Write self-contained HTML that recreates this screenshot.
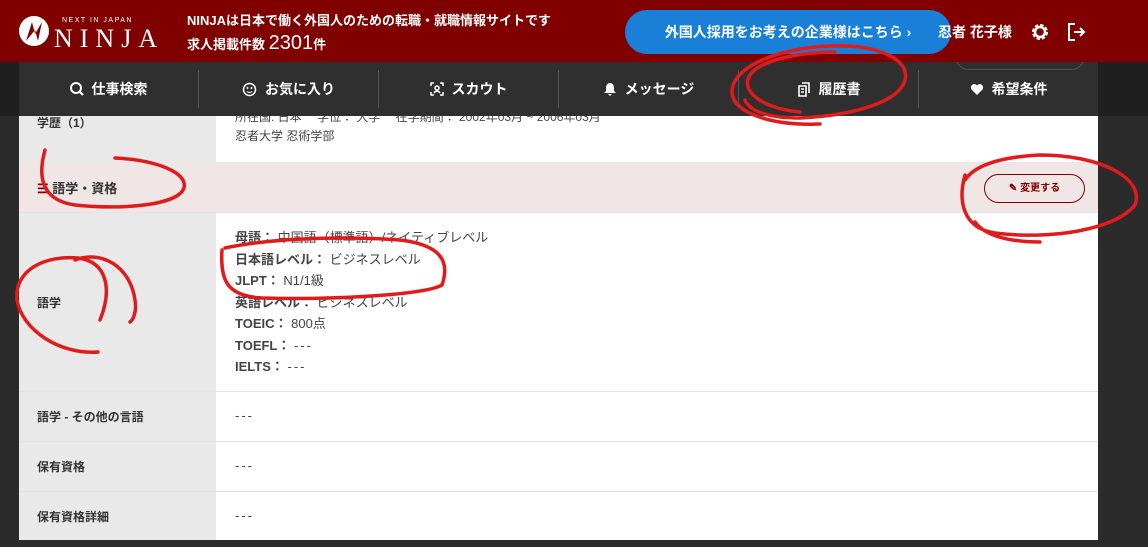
<!DOCTYPE html>
<html><head><meta charset="utf-8"><style>
*{margin:0;padding:0;box-sizing:border-box}
body{width:1148px;height:547px;overflow:hidden;background:#2b2b2b;font-family:"Liberation Sans","Noto Sans CJK JP",sans-serif;position:relative;color:#333}
.hdr{position:absolute;left:0;top:0;width:1148px;height:62px;background:#800000;color:#fff}
.logo{position:absolute;left:18px;top:14px}
.tag{position:absolute;left:187px;top:10px;font-size:13px;font-weight:bold;line-height:22px}
.tag b{font-size:20px;font-weight:normal}
.cta{position:absolute;left:625px;top:10px;width:326px;height:44px;border-radius:22px;background:#1a7fd6;color:#fff;font-size:14px;font-weight:bold;text-align:center;line-height:44px}
.user{position:absolute;left:938px;top:22px;font-size:14px;font-weight:bold}
.ghost{position:absolute;left:955px;top:40px;width:130px;height:30px;border:1px solid #555;border-radius:14px;z-index:3}
.nav{position:absolute;left:19px;top:62px;width:1079px;height:54px;background:#2f2f2f;display:flex;z-index:2}
.navl{position:absolute;left:0;top:62px;width:19px;height:54px;background:#1f1f1f;z-index:2}
.navr{position:absolute;left:1098px;top:62px;width:50px;height:54px;background:#1f1f1f;z-index:2}
.nav div{flex:1;color:#fff;font-size:14px;font-weight:bold;display:flex;align-items:center;justify-content:center;gap:8px;border-left:1px solid #555;margin:8px 0}
.nav div:first-child{border-left:none}
.card{position:absolute;left:19px;top:100px;width:1079px;height:440px;background:#fff}
.row{position:absolute;left:0;width:1079px;border-top:1px solid #e4e4e4}
.lab{position:absolute;left:0;top:0;bottom:0;width:197px;background:#e9e9e9;font-size:12px;font-weight:bold;padding-left:18px;display:flex;align-items:center}
.val{position:absolute;left:216px;font-size:13px;color:#444}
.sec{position:absolute;left:0;top:62px;width:1079px;height:50px;background:#f0e6e6}
.btn{position:absolute;left:965px;top:12px;width:101px;height:29px;border:1px solid #800000;border-radius:15px;color:#800000;font-size:10px;font-weight:bold;text-align:center;line-height:27px}
.lines div{height:21.5px;line-height:21.5px}
.d{letter-spacing:2px}
</style></head><body>
<div class="hdr">
 <div class="logo"><svg width="145" height="34"><circle cx="16" cy="17" r="15" fill="#fff"/><path d="M8 27 L14 8 L17 20 L24 8 L20 27 L17 16 Z" fill="#800000"/><text x="44" y="8" font-size="7" fill="#fff" letter-spacing="1.5" font-family="Liberation Sans">NEXT IN JAPAN</text><text x="36" y="33" font-size="26" fill="#fff" letter-spacing="7" font-family="Liberation Serif">NINJA</text></svg></div>
 <div class="tag">NINJAは日本で働く外国人のための転職・就職情報サイトです<br>求人掲載件数 <b>2301</b>件</div>
 <div class="cta">外国人採用をお考えの企業様はこちら ›</div>
 <div class="user">忍者 花子様</div>
 <svg style="position:absolute;left:1030px;top:22px" width="20" height="20" viewBox="0 0 20 20"><circle cx="10" cy="10" r="6" fill="none" stroke="#fff" stroke-width="4" stroke-dasharray="3 1.7"/><circle cx="10" cy="10" r="5" fill="none" stroke="#fff" stroke-width="2.5"/></svg>
 <svg style="position:absolute;left:1066px;top:22px" width="20" height="20" viewBox="0 0 20 20"><path d="M9 2H3v16h6M8 10h10M14 6l4 4-4 4" fill="none" stroke="#fff" stroke-width="2"/></svg>
</div>
<div style="position:absolute;left:940px;top:62px;width:160px;height:10px;overflow:hidden;z-index:3"><div style="position:absolute;left:15px;top:-22px;width:130px;height:30px;border:1px solid #555;border-radius:14px"></div></div>
<div class="navl"></div><div class="navr"></div>
<div class="nav">
 <div><svg width="14" height="14"><circle cx="6" cy="6" r="5" fill="none" stroke="#fff" stroke-width="2"/><path d="M10 10l3 3" stroke="#fff" stroke-width="2"/></svg>仕事検索</div>
 <div><svg width="15" height="15"><circle cx="7.5" cy="7.5" r="6" fill="none" stroke="#fff" stroke-width="1.5"/><circle cx="5.5" cy="6" r="1" fill="#fff"/><circle cx="9.5" cy="6" r="1" fill="#fff"/><path d="M5 9.5q2.5 2 5 0" stroke="#fff" fill="none"/></svg>お気に入り</div>
 <div><svg width="14" height="14" fill="none" stroke="#fff" stroke-width="1.5"><path d="M1 4V1h3M10 1h3v3M13 10v3h-3M4 13H1v-3"/><circle cx="7" cy="6" r="2"/><path d="M4 11q3-4 6 0"/></svg>スカウト</div>
 <div><svg width="14" height="14"><path d="M7 1c3 0 4 3 4 5v3l2 2H1l2-2V6c0-2 1-5 4-5zM5 12h4l-2 2z" fill="#fff"/></svg>メッセージ</div>
 <div><svg width="14" height="15" fill="none" stroke="#fff" stroke-width="1.6"><path d="M2 4h7v10H2zM5 1h7v10M4 7h3M4 10h3"/></svg>履歴書</div>
 <div><svg width="14" height="13"><path d="M7 12L1.5 6.5A3 3 0 0 1 7 2.5a3 3 0 0 1 5.5 4z" fill="#fff"/></svg>希望条件</div>
</div>
<div class="card">
 <div class="row" style="top:0;height:62px;border:none"><div class="lab" style="align-items:flex-start;padding-top:14px">学歴（1）</div>
  <div class="val" style="top:8px;line-height:19px;font-size:12px">所在国: 日本　 学位： 大学　 在学期間： 2002年03月 ~ 2006年03月<br>忍者大学 忍術学部</div></div>
 <div class="sec"><span style="position:absolute;left:18px;top:16px;font-size:13px;font-weight:bold;color:#333"><span style="color:#800000">☰</span> 語学・資格</span><div class="btn">✎ 変更する</div></div>
 <div class="row" style="top:112px;height:179px"><div class="lab">語学</div>
  <div class="val lines" style="top:14px"><div><b>母語：</b> 中国語（標準語）/ネイティブレベル</div><div><b>日本語レベル：</b> ビジネスレベル</div><div><b>JLPT：</b> N1/1級</div><div><b>英語レベル：</b> ビジネスレベル</div><div><b>TOEIC：</b> 800点</div><div><b>TOEFL：</b> <span class="d">---</span></div><div><b>IELTS：</b> <span class="d">---</span></div></div></div>
 <div class="row" style="top:291px;height:50px"><div class="lab">語学 - その他の言語</div><div class="val d" style="top:16px">---</div></div>
 <div class="row" style="top:341px;height:50px"><div class="lab">保有資格</div><div class="val d" style="top:16px">---</div></div>
 <div class="row" style="top:391px;height:49px"><div class="lab">保有資格詳細</div><div class="val d" style="top:16px">---</div></div>
</div>
<svg style="position:absolute;left:0;top:0;z-index:5" width="1148" height="547" fill="none" stroke="#e01b1b" stroke-width="3.5" stroke-linecap="round">
 <path d="M820 124C770 126 732 112 732 92C732 66 780 48 830 46C880 44 910 60 905 80C900 100 860 115 800 118C770 118 750 112 745 100M835 52C800 52 760 60 750 75C740 90 760 108 800 112"/>
 <path d="M45 150C38 175 40 200 75 205C125 210 178 205 184 188C188 172 155 160 115 158"/>
 <path d="M965 175C958 200 962 228 995 233C1050 240 1115 230 1135 205C1145 178 1100 155 1040 155C1000 157 975 165 965 180M1040 242C1010 242 985 236 975 222"/>
 <path d="M222 250C220 282 228 296 262 298C330 300 425 295 442 285C450 262 442 245 400 240C330 235 262 240 225 248"/>
 <path d="M98 352C60 355 22 330 17 300C14 270 45 255 78 258C108 262 112 290 100 320M75 260C100 250 130 265 135 300C137 312 133 320 130 322"/>
</svg>
</body></html>
